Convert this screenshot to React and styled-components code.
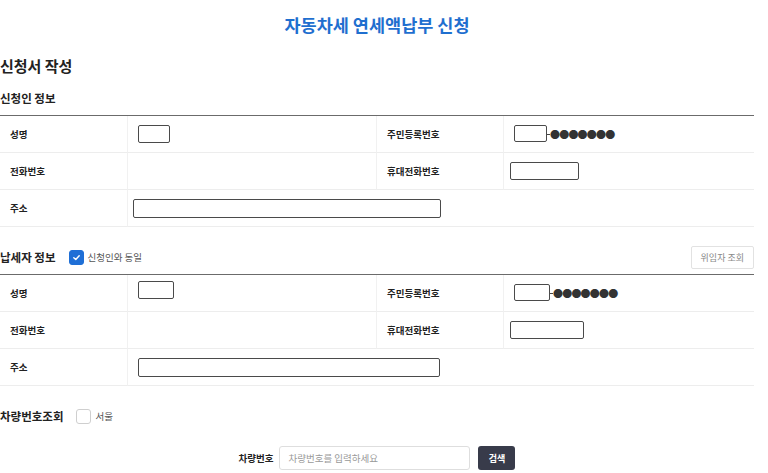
import React from 'react';
import styled, { createGlobalStyle } from 'styled-components';

const GlobalStyle = createGlobalStyle`
  body {
    margin: 0;
    background: #fff;
    font-family: "Noto Sans CJK KR", "Noto Sans", sans-serif;
    color: #222;
  }
`;

const Page = styled.div`
  width: 754px;
  display: flex;
  flex-direction: column;
`;

const Title = styled.h1`
  margin: 0;
  height: 48px;
  display: flex;
  align-items: center;
  justify-content: center;
  font-size: 17.5px;
  font-weight: 700;
  color: #1f6fcf;
`;

const PageHeading = styled.h2`
  margin: 7px 0 0;
  font-size: 15px;
  line-height: 22px;
  font-weight: 700;
`;

const SectionHead = styled.div`
  display: flex;
  align-items: center;
  justify-content: space-between;
  height: 24px;
  margin-top: ${p => p.$top || 0}px;
  margin-bottom: 5px;
`;

const SectionTitle = styled.h3`
  margin: 0;
  font-size: 11.5px;
  font-weight: 700;
  display: flex;
  align-items: center;
  gap: 13px;
`;

const CheckLabel = styled.label`
  display: flex;
  align-items: center;
  gap: 4px;
  font-size: 9.5px;
  font-weight: 400;
  color: #555;
`;

const CheckBox = styled.span`
  width: 15px;
  height: 15px;
  border-radius: 3px;
  box-sizing: border-box;
  display: inline-flex;
  align-items: center;
  justify-content: center;
  background: ${p => (p.$checked ? '#1f6fd6' : '#fff')};
  border: 1px solid ${p => (p.$checked ? '#1f6fd6' : '#cfcfcf')};
`;

const GhostButton = styled.button`
  height: 23px;
  padding: 0 9px;
  border: 1px solid #e2e2e2;
  border-radius: 2px;
  background: #fff;
  font-family: inherit;
  font-size: 9px;
  color: #888;
`;

const Table = styled.div`
  display: grid;
  grid-template-columns: 128px 249px 127px 1fr;
  border-top: 1px solid #6b6b6b;
`;

const Label = styled.div`
  height: 36px;
  display: flex;
  align-items: center;
  padding-left: 10px;
  font-size: 9.5px;
  font-weight: 700;
  border-bottom: 1px solid #ededed;
  border-right: 1px solid #f1f1f1;
`;

const Value = styled.div`
  height: 36px;
  display: flex;
  align-items: center;
  padding-left: ${p => p.$pad || 10}px;
  border-bottom: 1px solid #ededed;
  border-right: ${p => (p.$last ? 'none' : '1px solid #f1f1f1')};
  grid-column: ${p => p.$span || 'auto'};
`;

const BoxInput = styled.span`
  display: inline-block;
  width: ${p => p.$w}px;
  height: ${p => p.$h || 18}px;
  box-sizing: border-box;
  border: 1px solid #4a4a4a;
  border-radius: 2px;
  background: #fff;
  margin-top: ${p => p.$dy || 0}px;
`;

const Dash = styled.span`
  width: 3px;
  height: 1px;
  background: #444;
`;

const Dots = styled.span`
  font-size: 10px;
  letter-spacing: -0.8px;
  color: #333;
`;

const LookupRow = styled.div`
  display: flex;
  align-items: center;
  gap: 4px;
  margin-top: 19px;
  height: 22px;
`;

const LookupTitle = styled.h3`
  margin: 0 9px 0 0;
  font-size: 11.5px;
  font-weight: 700;
`;

const SmallText = styled.span`
  font-size: 9.5px;
  color: #555;
`;

const SearchRow = styled.div`
  display: flex;
  align-items: center;
  justify-content: center;
  gap: 6px;
  margin-top: 19px;
`;

const SearchLabel = styled.span`
  font-size: 9.5px;
  font-weight: 700;
`;

const SearchInput = styled.input`
  width: 191px;
  height: 24px;
  box-sizing: border-box;
  border: 1px solid #dedede;
  border-radius: 3px;
  padding: 0 8px;
  font-family: inherit;
  font-size: 9.5px;
  &::placeholder { color: #999; }
`;

const DarkButton = styled.button`
  width: 37px;
  height: 24px;
  margin-left: 2px;
  border: none;
  border-radius: 3px;
  background: #383b4a;
  color: #fff;
  font-family: inherit;
  font-size: 9px;
  font-weight: 700;
`;

function Check() {
  return (
    <svg width="9" height="9" viewBox="0 0 10 10">
      <polyline points="2,5.2 4.2,7.2 8,3" fill="none" stroke="#fff" strokeWidth="1.6" strokeLinecap="round" strokeLinejoin="round" />
    </svg>
  );
}

function InfoTable({ nameW, nameDy, rrnW, rrnDy, phoneW, addrPad, addrW, addrH }) {
  return (
    <Table>
      <Label>성명</Label>
      <Value><BoxInput $w={nameW} $dy={nameDy} /></Value>
      <Label>주민등록번호</Label>
      <Value $last>
        <BoxInput $w={rrnW} $h={17} $dy={rrnDy} />
        <Dash />
        <Dots>●●●●●●●</Dots>
      </Value>
      <Label>전화번호</Label>
      <Value />
      <Label>휴대전화번호</Label>
      <Value $last $pad={6}><BoxInput $w={phoneW} /></Value>
      <Label>주소</Label>
      <Value $span="2 / 5" $last $pad={addrPad}><BoxInput $w={addrW} $h={addrH} /></Value>
    </Table>
  );
}

export default function App() {
  return (
    <>
      <GlobalStyle />
      <Page>
        <Title>자동차세 연세액납부 신청</Title>
        <PageHeading>신청서 작성</PageHeading>
        <SectionHead $top={9}>
          <SectionTitle>신청인 정보</SectionTitle>
        </SectionHead>
        <InfoTable nameW={32} nameDy={0} rrnW={33} rrnDy={-2} phoneW={69} addrPad={5} addrW={308} addrH={19} />
        <SectionHead $top={18}>
          <SectionTitle>
            납세자 정보
            <CheckLabel>
              <CheckBox $checked><Check /></CheckBox>
              신청인와 동일
            </CheckLabel>
          </SectionTitle>
          <GhostButton>위임자 조회</GhostButton>
        </SectionHead>
        <InfoTable nameW={36} nameDy={-6} rrnW={36} rrnDy={-2} phoneW={74} addrPad={10} addrW={302} addrH={19} />
        <LookupRow>
          <LookupTitle>차량번호조회</LookupTitle>
          <CheckBox />
          <SmallText>서울</SmallText>
        </LookupRow>
        <SearchRow>
          <SearchLabel>차량번호</SearchLabel>
          <SearchInput placeholder="차량번호를 입력하세요" />
          <DarkButton>검색</DarkButton>
        </SearchRow>
      </Page>
    </>
  );
}
